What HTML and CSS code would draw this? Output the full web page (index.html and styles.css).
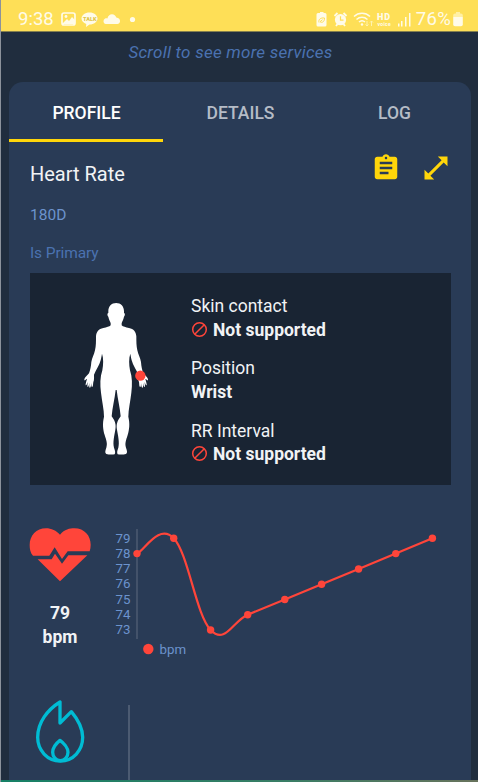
FILE: index.html
```html
<!DOCTYPE html>
<html lang="en">
<head>
    <meta charset="UTF-8">
    <meta name="viewport" content="width=device-width, initial-scale=1.0">
    <title>Heart Rate</title>
    <link rel="stylesheet" href="styles.css">
</head>
<body>

    <div class="status-bar">
        <span class="time">9:38</span>
        <svg class="status-left" width="76" height="18" viewBox="0 0 76 18">
            <rect x="1" y="3" width="13" height="12" rx="2" fill="none" stroke="#fffbe8" stroke-width="1.7"/>
            <circle cx="5" cy="6.5" r="1.4"/>
            <path d="M2 13l4-4 2 2 3-4 3 3v4H2z"/>
            <path d="M28.500 2.500c4.500 0 8 2.700 8 6s-3.500 6-8 6l-3.500 2.500.3-3c-2.800-.9-4.800-3-4.800-5.500 0-3.300 3.500-6 8-6z"/>
            <text class="talk" x="22.100" y="10.500">TALK</text>
            <path d="M44.500 14a3 3 0 0 1-.4-5.500c1-.5 1.600-.3 2.300 0 .5-2.700 2.300-4.300 4.600-4.300 2.200 0 3.700 1.300 4.300 3.400 2.500.2 4 1.700 3.700 4-.2 1.500-1.200 2.400-2.500 2.400z"/>
            <circle cx="71.500" cy="9.500" r="2.600"/>
        </svg>
        <div class="status-right">
            <svg width="94" height="18" viewBox="0 0 94 18">
                <path d="M4 3V2h3.500v1H9a1.500 1.500 0 0 1 1.500 1.500V15A1.500 1.500 0 0 1 9 16.500H2A1.500 1.500 0 0 1 .5 15V4.500A1.500 1.500 0 0 1 2 3z"/>
                <path d="M3 12.500c-.8-3 1.500-5 5.500-4.500 0 3.500-2 5.300-4.500 3.700l2.500-2" fill="none" stroke="#fedf57" stroke-width="1"/>
                <circle cx="24.500" cy="9.700" r="5.600"/>
                <path d="M18.500 6l3-3M30.500 6l-3-3M20 16l1.500-2M29 16l-1.500-2" fill="none" stroke="#fffbe8" stroke-width="1.800"/>
                <path d="M24.500 6.300v3.900h3" fill="none" stroke="#fedf57" stroke-width="1.200"/>
                <path d="M38 6.500c4.500-4.300 11.500-4.300 16 0M40.500 9.500c3.200-3 7.800-3 11 0M43 12c1.800-1.600 4.200-1.600 6 0" fill="none" stroke="#fffbe8" stroke-width="1.500"/>
                <circle cx="46" cy="14.500" r="1.200"/>
                <path d="M51 11v5m-1.500-1.500L51 16l1.500-1.500M55.500 16v-5M54 12.500l1.500-1.500 1.500 1.500" fill="none" stroke="#fff3ae" stroke-width="1"/>
                <text class="hd" x="61" y="9.500">HD</text>
                <text class="voice" x="61.500" y="16">voice</text>
                <path d="M82 13.500h1.500V16.500H82zM85 11h1.500v5.500H85zM89 7h1.500v9.500H89zM93 3h1.500v13.500H93z"/>
            </svg>
            <span class="percent">76%</span>
            <svg width="10" height="18" viewBox="0 0 10 18">
                <path d="M3 2h4v1.500h1A1.800 1.800 0 0 1 9.800 5.300V7H.2V5.300A1.800 1.800 0 0 1 2 3.500h1z" fill="#fff0a5"/>
                <path d="M.2 7h9.600v7.500A1.800 1.800 0 0 1 8 16.300H2A1.800 1.800 0 0 1 .2 14.500z"/>
            </svg>
        </div>
    </div>

    <p class="hint"><span>Scroll to see more services</span></p>

    <div class="card">
        <div class="tabs">
            <div class="tab active"><span>PROFILE</span></div>
            <div class="tab"><span>DETAILS</span></div>
            <div class="tab"><span>LOG</span></div>
        </div>

        <div class="content">
            <div class="title-row">
                <h2>Heart Rate</h2>
                <div class="actions">
                    <svg width="30" height="30" viewBox="0 0 24 24">
                        <path d="M19 3h-4.180C14.400 1.840 13.300 1 12 1c-1.300 0-2.400.84-2.820 2H5c-1.100 0-2 .9-2 2v14c0 1.100.9 2 2 2h14c1.100 0 2-.9 2-2V5c0-1.100-.9-2-2-2zm-7 0c.55 0 1 .45 1 1s-.45 1-1 1-1-.45-1-1 .45-1 1-1zm2 14H7v-2h7v2zm3-4H7v-2h10v2zm0-4H7V7h10v2z"/>
                    </svg>
                    <svg width="24" height="24" viewBox="0 0 24 24">
                        <path d="M13.800.5H23.500V10.200L19.700 6.400 6.400 19.700l3.800 3.800H.5V13.800l3.800 3.800L17.600 4.300z"/>
                    </svg>
                </div>
            </div>
            <p class="uuid"><span>180D</span></p>
            <p class="primary"><span>Is Primary</span></p>

            <div class="panel">
                <svg class="figure" width="65" height="154" viewBox="190 112 195 462">
                    <defs>
                        <path id="half" d="M287 115c-15 0-24 10-24 25v5c-4 0-3 9 0 11 2 11 6 14 7 20v6c-4 4-12 6-22 8-14 3-21 11-22 25 0 16 0 29-3 42-3 14-9 23-11 35-1 13-3 24-7 34-4 6-10 9-13 15 0 2-2 5-1 6 3 1 5-5 8-4-2 7-5 16-4 19 3 1 4-5 6-10 0 5-2 13 0 15 3 1 4-8 5-12 0 5-1 13 1 14 4 1 4-9 5-14 0 5 0 11 2 12 4 0 3-10 4-15 3-6 2-16 2-22 6-14 16-28 20-43 2-9 3-14 4-20C249 281 248 300 245 317C238 337 238 361 241 384C244 411 250 434 250 456C245 478 247 493 252 511C257 527 261 536 257 549C254 557 252 564 257 568C264 570 275 570 282 569C285 563 283 557 280 549C276 532 281 513 284 495C287 479 283 469 273 455C275 428 282 404 285 376H287z"/>
                    </defs>
                    <use href="#half" fill="#fff"/>
                    <use href="#half" fill="#fff" transform="translate(573 0) scale(-1 1)"/>
                    <circle cx="359" cy="333" r="15.500" fill="#ff453a"/>
                </svg>
                <dl class="facts">
                    <div>
                        <dt>Skin contact</dt>
                        <dd><svg width="17" height="17" viewBox="0 0 17 17"><circle cx="8.500" cy="8.500" r="6.800"/><path d="M3.700 13.300l9.600-9.600"/></svg><span>Not supported</span></dd>
                    </div>
                    <div>
                        <dt>Position</dt>
                        <dd><span>Wrist</span></dd>
                    </div>
                    <div>
                        <dt>RR Interval</dt>
                        <dd><svg width="17" height="17" viewBox="0 0 17 17"><circle cx="8.500" cy="8.500" r="6.800"/><path d="M3.700 13.300l9.600-9.600"/></svg><span>Not supported</span></dd>
                    </div>
                </dl>
            </div>

            <div class="measure">
                <div class="reading">
                    <svg width="62" height="54" viewBox="0 0 186 162">
                        <path d="M93 20C107 4 122 1 136 1c31 0 49 23 49 49 0 7-1 14-3 20H116l-17 23-22-35-16 25H12C4 75 2 63 2 51 2 23 22 1 51 1c16 0 31 7 42 19z"/>
                        <path d="M26 94h42l10-17 21 30 19-25h57l-82 78z"/>
                    </svg>
                    <div class="value">79<br>bpm</div>
                </div>
                <svg class="chart" width="330" height="136" viewBox="110 525 330 136">
                    <path class="axis" d="M137 529v110"/>
                    <g class="labels">
                        <text x="130.500" y="542.500">79</text>
                        <text x="130.500" y="557.800">78</text>
                        <text x="130.500" y="573.100">77</text>
                        <text x="130.500" y="588.400">76</text>
                        <text x="130.500" y="603.700">75</text>
                        <text x="130.500" y="619">74</text>
                        <text x="130.500" y="634.300">73</text>
                    </g>
                    <path class="line" d="M137 553.600C144.400 550.500 159 523 173.700 538.300C188.400 553.600 195.900 614.700 210.600 630C225.300 645.300 232.900 620.800 247.700 614.700L284.800 599.500 321.600 584.200 358.600 569 395.800 553.600 432.400 538.300"/>
                    <g class="dots">
                        <circle cx="137" cy="553.600" r="3.700"/>
                        <circle cx="173.700" cy="538.300" r="3.700"/>
                        <circle cx="210.600" cy="630" r="3.700"/>
                        <circle cx="247.700" cy="614.700" r="3.700"/>
                        <circle cx="284.800" cy="599.500" r="3.700"/>
                        <circle cx="321.600" cy="584.200" r="3.700"/>
                        <circle cx="358.600" cy="569" r="3.700"/>
                        <circle cx="395.800" cy="553.600" r="3.700"/>
                        <circle cx="432.400" cy="538.300" r="3.700"/>
                        <circle cx="148.300" cy="649" r="5.200"/>
                    </g>
                    <text class="legend" x="159.500" y="653.800">bpm</text>
                </svg>
            </div>

            <div class="energy">
                <svg width="50" height="64" viewBox="0 0 150 192">
                    <path d="M75 9v63l34-34c21 25 34 50 34 77 0 39-28 71-67 71S8 154 8 115C8 70 38 32 75 9z"/>
                    <path d="M75 124c-9 7-22 22-22 36 0 14 10 25 23 25s23-11 23-25c0-14-14-29-24-36z"/>
                </svg>
                <div class="divider"></div>
            </div>
        </div>
    </div>

    <div class="bottom-edge"></div>

</body>
</html>
```

FILE: styles.css
```css
* {
    box-sizing: border-box;
}

body {
    font-family: Roboto, sans-serif;
    margin: 0;
    height: 782px;
    overflow: hidden;
    display: flex;
    flex-direction: column;
    background: #202d3e;
    border-left: 1px solid #8c929b;
    color: #f1f3f5;
}

p, h2, dl, dd {
    margin: 0;
}

svg {
    display: block;
    flex: none;
}

.status-bar {
    flex: none;
    height: 32px;
    padding: 7px 15px 0 17px;
    display: flex;
    align-items: flex-start;
    background: #fedf57;
    border-bottom: 1px solid #85804e;
    color: #fffbe8;
    fill: #fffbe8;
}

.time, .percent {
    font-size: 18.5px;
    line-height: 25px;
}

.status-left {
    margin: 3px 0 0 7px;
}

.status-right {
    margin-left: auto;
    display: flex;
}

.status-right svg {
    margin-top: 3px;
    overflow: visible;
}

.percent {
    margin: 0 2px 0 6px;
    letter-spacing: 0.3px;
}

.talk {
    font-size: 5.5px;
    font-weight: 900;
    fill: #e0c64e;
}

.hd {
    font-size: 9px;
    font-weight: 900;
    letter-spacing: 1px;
}

.voice {
    font-size: 5px;
    font-weight: 700;
    letter-spacing: 0.3px;
}

.hint {
    height: 50px;
    padding: 8px 18px 0 0;
    text-align: center;
    font-size: 17px;
    font-style: italic;
    line-height: 24px;
    letter-spacing: 0.25px;
    color: #4b72b0;
}

.card {
    flex: 1;
    min-height: 0;
    margin: 0 7px 0 8px;
    background: #293b56;
    border-radius: 14px 14px 0 0;
    overflow: hidden;
}

.tabs {
    display: flex;
    height: 60px;
}

.tab {
    flex: 1;
    padding: 5px 0 0 1px;
    display: flex;
    align-items: center;
    justify-content: center;
    font-size: 17.5px;
    font-weight: 500;
    color: #b5bcc6;
    border-bottom: 3px solid transparent;
}

.tab.active {
    color: #fff;
    border-color: #ffd60a;
}

.content {
    padding: 11px 20px 0 21px;
}

.title-row {
    display: flex;
    justify-content: space-between;
    height: 49px;
}

h2 {
    padding-top: 7px;
    font-size: 20px;
    font-weight: 400;
    line-height: 28px;
}

.actions {
    display: flex;
    gap: 23px;
    margin-right: 3px;
    fill: #ffd60a;
}

.actions svg:last-child {
    margin-top: 3px;
}

.uuid, .primary {
    font-size: 15.5px;
    line-height: 26px;
    color: #6c93cd;
}

.primary {
    height: 33px;
    margin-top: 12px;
    letter-spacing: -0.1px;
    color: #4b72b0;
}

.panel {
    display: flex;
    height: 212px;
    background: #192433;
}

.figure {
    margin: 29px 0 0 53.500px;
}

.facts {
    margin: 22px 0 0 42.500px;
    display: flex;
    flex-direction: column;
    gap: 15.300px;
    font-size: 17.5px;
    line-height: 23.500px;
}

dd {
    display: flex;
    gap: 5px;
    font-weight: 700;
}

dd svg {
    margin-top: 2px;
    fill: none;
    stroke: #ff453a;
    stroke-width: 1.5;
}

.measure {
    display: flex;
    margin-top: 40px;
    height: 174px;
}

.reading {
    width: 60px;
    padding-top: 3px;
    text-align: center;
    font-size: 17.5px;
    font-weight: 700;
    line-height: 24px;
}

.reading svg {
    fill: #ff453a;
    margin-left: -1px;
}

.value {
    margin-top: 19px;
}

.chart {
    margin-left: 20px;
}

.axis {
    stroke: #4c5b72;
    stroke-width: 1.5;
}

.labels, .legend {
    font-size: 13.3px;
    fill: #6c93cd;
}

.labels {
    text-anchor: end;
}

.line {
    fill: none;
    stroke: #ff453a;
    stroke-width: 2.2;
}

.dots {
    fill: #ff453a;
}

.energy {
    display: flex;
}

.energy svg {
    margin: 0 0 0 5px;
    fill: none;
    stroke: #00bcd4;
    stroke-width: 10;
    stroke-linejoin: round;
}

.divider {
    width: 1.5px;
    height: 100px;
    margin: 6px 0 0 43px;
    background: #4c5b72;
}

.bottom-edge {
    flex: none;
    height: 2px;
    background: linear-gradient(90deg, #168066, #397d65 60%, #68735c);
}
```
